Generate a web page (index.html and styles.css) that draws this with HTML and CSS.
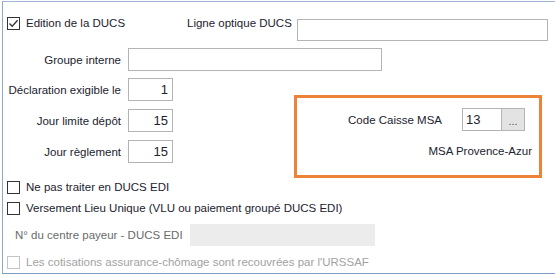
FILE: index.html
```html
<!DOCTYPE html>
<html lang="fr">
<head>
  <meta charset="UTF-8">
  <title>DUCS</title>
  <link rel="stylesheet" href="styles.css">
</head>
<body>
<div class="frame">
  <div class="top-row">
    <div class="check-item first">
      <span class="box"><svg width="11" height="11" viewBox="0 0 11 11"><path d="M1.5 5.5 L4.2 8.3 L9.6 2.2" fill="none" stroke="#333" stroke-width="1.3"/></svg></span>
      <span>Edition de la DUCS</span>
    </div>
    <div class="optique-label">Ligne optique DUCS</div>
    <div class="input optique"></div>
  </div>

  <div class="field-row groupe">
    <div class="field-label">Groupe interne</div>
    <div class="input wide"></div>
  </div>

  <div class="section">
    <div class="fields">
      <div class="field-row">
        <div class="field-label">Déclaration exigible le</div>
        <div class="input num">1</div>
      </div>
      <div class="field-row">
        <div class="field-label">Jour limite dépôt</div>
        <div class="input num">15</div>
      </div>
      <div class="field-row">
        <div class="field-label">Jour règlement</div>
        <div class="input num">15</div>
      </div>
    </div>
    <div class="msa-box">
      <div class="msa-row">
        <span class="msa-label">Code Caisse MSA</span>
        <div class="input code">13</div>
        <div class="dots">...</div>
      </div>
      <div class="msa-name">MSA Provence-Azur</div>
    </div>
  </div>

  <div class="check-item edi">
    <span class="box"></span>
    <span>Ne pas traiter en DUCS EDI</span>
  </div>
  <div class="check-item vlu">
    <span class="box"></span>
    <span>Versement Lieu Unique (VLU ou paiement groupé DUCS EDI)</span>
  </div>

  <div class="payeur-row">
    <span class="payeur-label">N° du centre payeur - DUCS EDI</span>
    <div class="input disabled"></div>
  </div>

  <div class="check-item off">
    <span class="box"></span>
    <span>Les cotisations assurance-chômage sont recouvrées par l'URSSAF</span>
  </div>
</div>
</body>
</html>
```

FILE: styles.css
```css
body {
  margin: 0;
  background-color: #fff;
  font-family: "Liberation Sans", Arial, sans-serif;
  font-size: 11.5px;
  color: #22222e;
}
.frame {
  margin: 1px 0 0 2px;
  height: 271px;
  border-top: 1px solid #9fb6d6;
  border-left: 1px solid #8ea6c8;
  border-bottom: 1px solid #7f9cc2;
  padding-left: 4px;
  overflow: hidden;
}
.top-row {
  display: flex;
  align-items: flex-start;
  margin-top: 15px;
}
.check-item {
  display: flex;
  align-items: center;
  height: 13px;
  line-height: 13px;
  white-space: nowrap;
}
.check-item .box {
  width: 13px;
  height: 13px;
  box-sizing: border-box;
  border: 1px solid #333;
  background-color: #fff;
  margin-right: 6px;
  display: flex;
  align-items: center;
  justify-content: center;
}
.check-item.first {
  width: 180px;
}
.optique-label {
  width: 110px;
  line-height: 13px;
  white-space: nowrap;
}
.input {
  box-sizing: border-box;
  height: 23px;
  border: 1px solid #b4b4b4;
  background-color: #fff;
  font-size: 13px;
  line-height: 21px;
}
.optique {
  width: 251px;
  height: 22px;
  margin-top: 2px;
}
.field-row {
  display: flex;
  align-items: center;
  height: 23px;
}
.field-label {
  width: 125px;
  box-sizing: border-box;
  margin-left: -4px;
  padding-right: 7px;
  text-align: right;
  white-space: nowrap;
}
.groupe {
  margin-top: 7px;
}
.wide {
  width: 254px;
}
.section {
  display: flex;
  margin-top: 7px;
}
.fields {
  display: flex;
  flex-direction: column;
  gap: 8px;
}
.num {
  width: 45px;
  text-align: right;
  padding-right: 4px;
}
.msa-box {
  box-sizing: border-box;
  width: 248px;
  height: 83px;
  margin: 17px 0 0 121px;
  border: 3px solid #ee8238;
  padding: 10px 14px 0 0;
}
.msa-row {
  display: flex;
  align-items: center;
  justify-content: flex-end;
}
.msa-label {
  margin-right: 20px;
}
.code {
  width: 40px;
  padding-left: 3px;
}
.dots {
  box-sizing: border-box;
  width: 23px;
  height: 23px;
  border: 1px solid #b4b4b4;
  border-left: none;
  background-color: #e3e3e3;
  color: #555;
  font-size: 11px;
  text-align: center;
  line-height: 24px;
}
.msa-name {
  margin: 14px -7px 0 0;
  text-align: right;
}
.edi {
  margin-top: 3px;
}
.vlu {
  margin-top: 8px;
}
.payeur-row {
  display: flex;
  align-items: center;
  margin-top: 9px;
}
.payeur-label {
  width: 183px;
  padding-left: 8px;
  box-sizing: border-box;
  color: #6a6a6a;
  white-space: nowrap;
}
.disabled {
  width: 185px;
  height: 22px;
  border: 1px solid #ececec;
  background-color: #ececec;
}
.off {
  margin-top: 10px;
  color: #a2a2a2;
}
.off .box {
  border-color: #c4c4c4;
}
```
